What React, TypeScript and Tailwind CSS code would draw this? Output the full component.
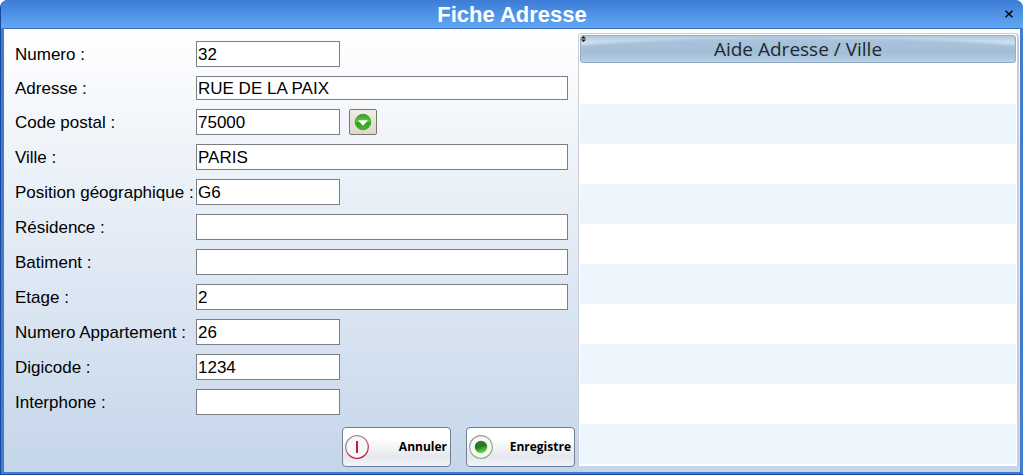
import React, { useState } from 'react';

type Field = {
  id: string;
  label: string;
  value: string;
  size: 'short' | 'long';
  compact?: boolean;
  lookup?: boolean;
};

const fields: Field[] = [
  { id: 'numero', label: 'Numero :', value: '32', size: 'short' },
  { id: 'adresse', label: 'Adresse :', value: 'RUE DE LA PAIX', size: 'long', compact: true },
  { id: 'code-postal', label: 'Code postal :', value: '75000', size: 'short', lookup: true },
  { id: 'ville', label: 'Ville :', value: 'PARIS', size: 'long' },
  { id: 'position', label: 'Position géographique :', value: 'G6', size: 'short' },
  { id: 'residence', label: 'Résidence :', value: '', size: 'long' },
  { id: 'batiment', label: 'Batiment :', value: '', size: 'long' },
  { id: 'etage', label: 'Etage :', value: '2', size: 'long' },
  { id: 'appartement', label: 'Numero Appartement :', value: '26', size: 'short' },
  { id: 'digicode', label: 'Digicode :', value: '1234', size: 'short' },
  { id: 'interphone', label: 'Interphone :', value: '', size: 'short' },
];

function DownIcon() {
  return (
    <svg viewBox="0 0 18 18" className="size-[18px]" aria-hidden="true">
      <defs>
        <linearGradient id="down-fill" x1="0" y1="0" x2="0" y2="1">
          <stop offset="0" stopColor="#2f9a2c" />
          <stop offset="0.45" stopColor="#63c83f" />
          <stop offset="0.55" stopColor="#2ba51d" />
          <stop offset="1" stopColor="#3fb82c" />
        </linearGradient>
      </defs>
      <circle cx="9" cy="9" r="7.8" fill="url(#down-fill)" stroke="#3a9a35" strokeWidth="0.8" />
      <path d="M4 7.2h10L9 12.8z" fill="#fff" />
    </svg>
  );
}

function CancelIcon() {
  return (
    <svg viewBox="0 0 26 26" className="size-[26px] shrink-0" aria-hidden="true">
      <defs>
        <linearGradient id="cancel-ring" x1="0.2" y1="0" x2="0.6" y2="1">
          <stop offset="0" stopColor="#9a9196" />
          <stop offset="0.45" stopColor="#b8798a" />
          <stop offset="1" stopColor="#bf1b3e" />
        </linearGradient>
      </defs>
      <circle cx="13" cy="13" r="11.3" fill="#f7f7f9" stroke="url(#cancel-ring)" strokeWidth="1.3" />
      <path d="M13 7v12" stroke="#c0202c" strokeWidth="2" />
    </svg>
  );
}

function SaveIcon() {
  return (
    <svg viewBox="0 0 26 26" className="size-[26px] shrink-0" aria-hidden="true">
      <defs>
        <linearGradient id="save-ring" x1="0.2" y1="0" x2="0.6" y2="1">
          <stop offset="0" stopColor="#8d9490" />
          <stop offset="0.5" stopColor="#a3b5a0" />
          <stop offset="1" stopColor="#7fb86a" />
        </linearGradient>
        <linearGradient id="save-dot" x1="0.3" y1="0" x2="0.6" y2="1">
          <stop offset="0" stopColor="#3b7a38" />
          <stop offset="0.45" stopColor="#237a1a" />
          <stop offset="1" stopColor="#6fe052" />
        </linearGradient>
      </defs>
      <circle cx="13" cy="13" r="11.3" fill="#f7f9f8" stroke="url(#save-ring)" strokeWidth="1.3" />
      <circle cx="13" cy="13" r="6.2" fill="url(#save-dot)" />
    </svg>
  );
}

function ActionButton({ icon, children }: { icon: React.ReactNode; children: React.ReactNode }) {
  return (
    <button
      type="button"
      className="flex h-10 w-[109px] items-center justify-between rounded-[4px] border border-[#6d8097] bg-linear-to-b from-white from-30% via-[#e4e7ee] via-75% to-[#f2f4f8] pl-px pr-[3px] font-['Open_Sans',sans-serif] text-[12px] font-bold text-black"
    >
      {icon}
      {children}
    </button>
  );
}

function AddressForm() {
  const [values, setValues] = useState<Record<string, string>>(
    Object.fromEntries(fields.map((f) => [f.id, f.value])),
  );

  return (
    <form className="flex w-[574px] shrink-0 flex-col pt-3 pl-[11px]">
      <div className="flex flex-col gap-[9px]">
        {fields.map((f) => (
          <div key={f.id} className="flex items-center">
            <label
              htmlFor={f.id}
              className={[
                'w-[181px] shrink-0 pt-[2px] text-[17px] whitespace-nowrap',
                f.compact ? 'leading-[22px]' : 'leading-6',
              ].join(' ')}
            >
              {f.label}
            </label>
            <input
              id={f.id}
              type="text"
              value={values[f.id]}
              onChange={(e) => setValues({ ...values, [f.id]: e.target.value })}
              className={[
                'border border-[#7b7f83] bg-white px-px pt-[2px] text-[17px] outline-none',
                f.size === 'long' ? 'w-[372px]' : 'w-36',
                f.compact ? 'h-6' : 'h-[26px]',
              ].join(' ')}
            />
            {f.lookup && (
              <button
                type="button"
                aria-label="Rechercher la ville"
                className="ml-[9px] flex h-[26px] w-7 items-center justify-center rounded-[2px] border border-[#77756c] bg-linear-to-b from-[#f0eee6] to-[#dcd7c8]"
              >
                <DownIcon />
              </button>
            )}
          </div>
        ))}
      </div>
      <div className="mt-3 flex justify-end gap-[15px] pr-[3px] pb-1">
        <ActionButton icon={<CancelIcon />}>Annuler</ActionButton>
        <ActionButton icon={<SaveIcon />}>Enregistre</ActionButton>
      </div>
    </form>
  );
}

function HelpList() {
  return (
    <div className="mt-1 mr-px mb-[6px] min-w-0 flex-1 rounded-t-[4px] border border-[#c9ced6] border-r-2 border-b-0 bg-white p-px pb-0">
      <table className="w-full border-collapse">
        <thead>
          <tr>
            <th className="p-0 pb-px font-normal">
              <div className="relative flex h-7 items-center justify-center overflow-hidden rounded-[3px] border border-[#93adc6] bg-[#a6c1da] font-['Open_Sans',sans-serif] text-[19px] text-[#20282e]">
                <svg
                  viewBox="0 0 436 26"
                  preserveAspectRatio="none"
                  className="absolute inset-0 size-full"
                  aria-hidden="true"
                >
                  <defs>
                    <linearGradient id="head-base" x1="0" y1="0" x2="0" y2="1">
                      <stop offset="0" stopColor="#a9c3da" />
                      <stop offset="0.65" stopColor="#a3bfd8" />
                      <stop offset="1" stopColor="#b9d0e4" />
                    </linearGradient>
                    <linearGradient id="head-gloss" x1="0" y1="0" x2="0" y2="1">
                      <stop offset="0" stopColor="#b4cce1" />
                      <stop offset="1" stopColor="#dbe7f1" />
                    </linearGradient>
                    <filter id="head-soft" x="-5%" y="-50%" width="110%" height="200%">
                      <feGaussianBlur stdDeviation="1" />
                    </filter>
                  </defs>
                  <path d="M0 0H436V26H0z" fill="url(#head-base)" />
                  <path
                    d="M0 0H436V9Q395 6 340 4Q218 1 96 4Q41 6 0 9z"
                    fill="url(#head-gloss)"
                    filter="url(#head-soft)"
                  />
                </svg>
                <span className="relative">Aide Adresse / Ville</span>
                <svg viewBox="0 0 5 6" className="absolute top-0 left-0 h-[6px] w-[5px]" aria-hidden="true">
                  <path d="M2.5 0L5 2.4H0zM2.5 6L0 3.6h5z" fill="#111" />
                </svg>
              </div>
            </th>
          </tr>
        </thead>
        <tbody>
          {Array.from({ length: 10 }, (_, i) => (
            <tr key={i} className="h-10 odd:bg-white even:bg-[#edf5fd]">
              <td className="p-0" />
            </tr>
          ))}
        </tbody>
      </table>
    </div>
  );
}

export default function App() {
  return (
    <div className="flex min-h-screen flex-col overflow-hidden rounded-t-[8px] border-b border-l border-[#174a9e] bg-[#427cd0] font-['Liberation_Sans',Arial,sans-serif] text-black">
      <header className="flex h-7 items-center bg-linear-to-b from-[#3c7cd6] to-[#62a8f4] pr-2">
        <h1 className="flex-1 pt-px pl-5 text-center text-[22px] leading-7 font-bold text-white">Fiche Adresse</h1>
        <button type="button" aria-label="Fermer" className="flex size-3 items-center justify-center">
          <svg viewBox="0 0 8 8" className="size-2" aria-hidden="true">
            <path d="M0.5 0.8L7.5 7.2M7.5 0.8L0.5 7.2" stroke="#000" strokeWidth="1.5" />
          </svg>
        </button>
      </header>
      <main className="mr-[3px] mb-[2px] ml-[3px] flex flex-1 border-t border-[#3a6cc0] bg-linear-to-b from-white to-[#c5d6ea]">
        <AddressForm />
        <HelpList />
      </main>
    </div>
  );
}
